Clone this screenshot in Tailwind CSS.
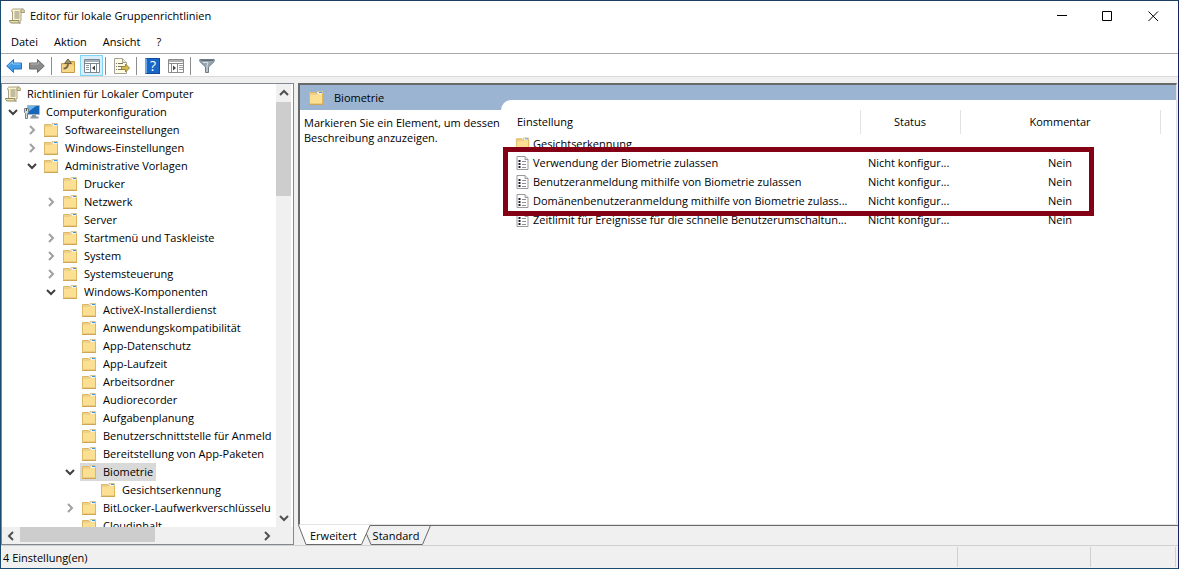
<!DOCTYPE html>
<html lang="de">
<head>
  <meta charset="UTF-8" />
  <meta name="viewport" content="width=device-width, initial-scale=1.0"/>
  <title>Editor für lokale Gruppenrichtlinien</title>
  <script src="https://cdn.jsdelivr.net/npm/@tailwindcss/browser@4"></script>
</head>
<body class="h-screen flex flex-col overflow-hidden bg-[#f0f0f0] border border-[#1b4c6d] border-t-[#1d3f62] border-r-[#1b2160] text-black text-[11px] leading-4 font-['Open_Sans','Noto_Sans',sans-serif]">

  <!-- Icon sprites -->
  <svg class="hidden">
    <symbol id="folder" viewBox="0 0 16 16">
      <path d="M1.5 2.500h6l1 1h6v10h-13z" fill="#eed08a" stroke="#dcb866"/>
      <path d="M9 1.500h5.500v3H9z" fill="#f7f3e4" stroke="#d9c591"/>
      <path d="M11 2h3v1h-3z" fill="#3b98e0"/>
      <path d="M2 5h6l1-1h5v9.500H2z" fill="#fbdf92"/>
      <path d="M1 14.500h14" stroke="#cfa654"/>
      <path d="M14.500 4v10" stroke="#dfb65c"/>
    </symbol>
    <symbol id="scroll" viewBox="0 0 16 16">
      <path d="M4.500 1c-1.500 0-2 1-2 2.500h1V13h8.500V3.500C12 2 12.500 1 13.500 1z" fill="#fdf3c8" stroke="#aaa284"/>
      <path d="M13.500 1c1.200 0 2 1 2 2.500V4.500H12V3.500C12 2 12.500 1 13.500 1z" fill="#d9cf9c" stroke="#a09a80"/>
      <path d="M.5 12.500h9c0 1.500.5 2.500 2 2.500H3C1.200 15 .5 14 .5 12.500z" fill="#efe2a8" stroke="#8f8768"/>
      <path d="M5.500 4h5M5.500 6h5M5.500 8h5M5.500 10h5" stroke="#858379"/>
    </symbol>
    <symbol id="computer" viewBox="0 0 16 16">
      <path d="M3.500 1.500h12v9h-12z" fill="#1467b8" stroke="#a9b6c2"/>
      <path d="M4 2h8l-8 6z" fill="#6ab4ec"/>
      <path d="M8 11h4v2H8z" fill="#8d979f"/>
      <path d="M6.500 13.500h8" stroke="#8b969f" stroke-width="2"/>
      <path d="M.5 4.500h4v4l-1 1v5h-2v-5l-1-1z" fill="#d2d9de" stroke="#74808a"/>
      <path d="M2.500 4v3" stroke="#4d5b66"/>
    </symbol>
    <symbol id="policy" viewBox="0 0 14 16">
      <path d="M1.500 1.500h8l3 3v10h-11z" fill="#fff" stroke="#9a9a9a"/>
      <path d="M9.500 1.500v3h3" fill="#e8e8e8" stroke="#9a9a9a"/>
      <path d="M3 5h2v2H3zM3 8h2v2H3zM3 11h2v2H3z" fill="#1f1f2a"/>
      <path d="M6.500 6.500h4M6.500 9.500h4M6.500 12.500h4" stroke="#8a8f99"/>
    </symbol>
    <symbol id="down" viewBox="0 0 10 10"><path d="M1 3l4 4 4-4" fill="none" stroke="currentColor" stroke-width="2"/></symbol>
    <symbol id="right" viewBox="0 0 10 10"><path d="M3 1l4 4-4 4" fill="none" stroke="currentColor" stroke-width="2"/></symbol>
    <symbol id="up" viewBox="0 0 10 10"><path d="M1 7l4-4 4 4" fill="none" stroke="currentColor" stroke-width="2"/></symbol>
    <symbol id="left" viewBox="0 0 10 10"><path d="M7 1L3 5l4 4" fill="none" stroke="currentColor" stroke-width="2"/></symbol>
  </svg>

  <!-- Title bar -->
  <header class="h-[30px] shrink-0 flex items-center bg-white pl-2">
    <svg class="size-4"><use href="#scroll"/></svg>
    <h1 class="pl-[5px]">Editor für lokale Gruppenrichtlinien</h1>
    <div class="ml-auto flex h-full pr-px">
      <button aria-label="Minimieren" class="w-[45px] flex items-center justify-center"><svg class="w-[11px] h-[11px]"><path d="M0 4.500h10" stroke="#000"/></svg></button>
      <button aria-label="Maximieren" class="w-[45px] flex items-center justify-center"><svg class="w-[11px] h-[11px]"><path d="M.5 .5h9v9h-9z" fill="none" stroke="#000"/></svg></button>
      <button aria-label="Schließen" class="w-[47px] flex items-center justify-center"><svg class="w-[11px] h-[11px]"><path d="M.5 .5l9.500 9.500M10 .5L.5 10" stroke="#000"/></svg></button>
    </div>
  </header>

  <!-- Menu -->
  <nav class="h-[23px] shrink-0 flex items-center gap-4 bg-white border-b border-[#a9a9a9] pl-[10px]">
    <button>Datei</button>
    <button>Aktion</button>
    <button>Ansicht</button>
    <button>?</button>
  </nav>

  <!-- Toolbar -->
  <div class="h-[23px] shrink-0 flex items-center bg-white border-b border-[#d9d9d9] pl-[5px] pt-px">
    <button aria-label="Zurück"><svg class="w-4 h-4" viewBox="0 0 16 16"><path d="M.7 8L7.500 1.500V5h8v6h-8v3.500z" fill="#3f9be6" stroke="#2a73b8"/><path d="M2.200 8L6.500 4v2h8" fill="none" stroke="#8fcbf7"/></svg></button>
    <button aria-label="Vor" class="ml-[7px]"><svg class="w-4 h-4" viewBox="0 0 16 16"><path d="M15.300 8L8.500 1.500V5h-8v6h8v3.500z" fill="#8b8b8b" stroke="#6c6c6c"/><path d="M1.500 6h8V4" fill="none" stroke="#b5b5b5"/></svg></button>
    <span class="w-px h-[18px] bg-[#8d8d8d] mx-[6px]"></span>
    <button aria-label="Eine Ebene nach oben" class="ml-[2px]"><svg class="w-4 h-4" viewBox="0 0 16 16"><path d="M1.500 5.500h4l1.500-2h7.500v11h-13z" fill="#eec874" stroke="#c79a44"/><path d="M2 7.500h12V14H2z" fill="#f8d88a"/><path d="M3.500 10.500c3 0 4.500-2 4.500-5" fill="none" stroke="#7a6c4b" stroke-width="2"/><path d="M4.500 5.500L8 1l3.500 4.500z" fill="#a39264" stroke="#6a5d3f"/></svg></button>
    <button aria-label="Konsolenstruktur ein-/ausblenden" class="ml-1 w-[23px] h-[21px] flex items-center justify-center bg-[#d8effb] border border-[#7fd3f5]"><svg class="w-4 h-[14px]" viewBox="0 0 16 14"><path d="M.5 .5h15v13H.5z" fill="#fff" stroke="#7c8691"/><path d="M1 2h14" stroke="#aab3bb" stroke-width="2"/><path d="M1 4.500h14M6.500 5v9M12.500 5v9" stroke="#7c8691"/><path d="M2 6.500h3M2 8.500h3M2 10.500h3" stroke="#8f98a2"/><path d="M11 6.500v5L8 9z" fill="#444"/></svg></button>
    <span class="w-px h-[18px] bg-[#8d8d8d] ml-[2px] mr-2"></span>
    <button aria-label="Liste exportieren"><svg class="w-4 h-4" viewBox="0 0 16 16"><path d="M.5 .5h8l4 4v11H.5z" fill="#fffbe3" stroke="#a5a298"/><path d="M8.500 .5v4h4" fill="#eee7c4" stroke="#a5a298"/><path d="M2 5.500h1M4 5.500h5M2 8.500h1M4 8.500h4M2 11.500h1M4 11.500h4" stroke="#77746a"/><path d="M7.500 8.500h4V6L15.500 10l-4 4v-2.500h-4z" fill="#d8bd57" stroke="#9a8438"/></svg></button>
    <span class="w-px h-[18px] bg-[#8d8d8d] ml-[6px] mr-2"></span>
    <button aria-label="Hilfe" class="w-[15px] h-4 bg-[#1a66c6] border border-[#144c9a] border-l-[#6aa9ec] border-l-2 text-white text-sm leading-[14px]">?</button>
    <button aria-label="Aktionsbereich ein-/ausblenden" class="ml-2"><svg class="w-4 h-[14px]" viewBox="0 0 16 14"><path d="M.5 .5h15v13H.5z" fill="#fff" stroke="#8a8a8a"/><path d="M1 2h14" stroke="#b0b0b0" stroke-width="2"/><path d="M1 4.500h14M3.500 5v9M9.500 5v9" stroke="#8a8a8a"/><path d="M11 6.500h4M11 8.500h4M11 10.500h4" stroke="#999"/><path d="M5 6.500v5L8 9z" fill="#444"/></svg></button>
    <span class="w-px h-[18px] bg-[#8d8d8d] ml-[6px] mr-2"></span>
    <button aria-label="Filter"><svg class="w-4 h-4" viewBox="0 0 16 16"><path d="M.8 1.500h14.400v2L9.500 9v5.500h-3V9L.8 3.500z" fill="#97a7b2" stroke="#6f7c86"/><path d="M2 2.500h12" stroke="#5d6a73"/><path d="M4 4.500h5L8 8v6" fill="none" stroke="#d5dfe6"/></svg></button>
  </div>

  <main class="flex-1 min-h-0 flex mt-[6px]">

    <!-- Tree pane -->
    <aside class="w-[293px] shrink-0 flex flex-col bg-white border border-[#828790]">
      <div class="flex-1 min-h-0 flex">
        <ul id="tree" class="flex-1 min-w-0 overflow-hidden whitespace-nowrap pt-px"></ul>
        <div class="w-[15px] mr-[2px] shrink-0 flex flex-col bg-[#f0f0f0] text-[#505050]">
          <button aria-label="Nach oben" class="h-[18px] flex items-center justify-center"><svg class="size-[10px]"><use href="#up"/></svg></button>
          <div class="h-[94px] bg-[#cdcdcd]"></div>
          <button aria-label="Nach unten" class="mt-auto h-[18px] flex items-center justify-center"><svg class="size-[10px]"><use href="#down"/></svg></button>
        </div>
      </div>
      <div class="h-[17px] shrink-0 flex bg-[#f0f0f0] text-[#505050] pr-[17px]">
        <button aria-label="Nach links" class="w-[18px] flex items-center justify-center"><svg class="size-[10px]"><use href="#left"/></svg></button>
        <div class="w-[135px] h-[15px] bg-[#cdcdcd]"></div>
        <button aria-label="Nach rechts" class="ml-auto w-[18px] flex items-center justify-center"><svg class="size-[10px]"><use href="#right"/></svg></button>
      </div>
    </aside>

    <!-- Detail pane -->
    <section class="flex-1 min-w-0 flex flex-col ml-1">
      <div class="flex-1 min-h-0 mr-px flex flex-col bg-white border-t-2 border-l-2 border-r border-b border-t-[#696969] border-l-[#696969] border-r-[#e3e3e3] border-b-[#e3e3e3]">
        <div class="h-[25px] shrink-0 flex items-center bg-[#9ab4d1] pl-2">
          <svg class="size-4"><use href="#folder"/></svg>
          <h2 class="pl-[10px]">Biometrie</h2>
        </div>
        <div class="flex-1 flex">
          <p class="w-[201px] shrink-0 pl-1 pt-[5px] leading-[15px] whitespace-nowrap">Markieren Sie ein Element, um dessen<br>Beschreibung anzuzeigen.</p>
          <div class="relative flex-1 min-w-0 -mt-[10px] pt-[10px] pl-2 rounded-tl-[10px] bg-white">
            <table class="table-fixed w-[651px] border-collapse">
              <thead>
                <tr class="h-6">
                  <th class="w-[351px] pl-2 text-left font-normal border-r border-[#e2e2e2]">Einstellung</th>
                  <th class="w-[100px] text-center font-normal border-r border-[#e2e2e2]">Status</th>
                  <th class="w-[200px] text-center font-normal border-r border-[#e2e2e2]">Kommentar</th>
                </tr>
              </thead>
              <tbody id="settings"></tbody>
            </table>
            <!-- Highlight around the three biometric settings -->
            <div class="absolute left-[2px] top-[47px] w-[591px] h-[69px] border-5 border-[#840015]"></div>
          </div>
        </div>
      </div>

      <!-- View tabs -->
      <div class="relative h-5 shrink-0 border-t border-[#696969] flex items-center">
        <svg class="absolute left-0 -top-px w-[140px] h-5" viewBox="0 0 140 20">
          <path d="M0 0h72l-8 19H8z" fill="#fff"/>
          <path d="M.5 0L8 19.500h55.500L72 .5" fill="none" stroke="#696969"/>
          <path d="M68.500 9l4.500 10.500h51.500L132.500 .5" fill="none" stroke="#696969"/>
        </svg>
        <button class="relative ml-3">Erweitert</button>
        <button class="relative ml-4">Standard</button>
      </div>
    </section>
  </main>

  <!-- Status bar -->
  <footer class="h-[23px] shrink-0 flex border-t border-[#d0d0d0] pr-[2px] py-px">
    <p class="flex-1 pl-[2px] leading-[22px] border-r border-[#d0d0d0]">4 Einstellung(en)</p>
    <div class="w-[133px] border-r border-[#d0d0d0]"></div>
    <div class="w-[85px] border-r border-[#d0d0d0]"></div>
  </footer>

  <script>
    // state: 'open', 'closed' or '' for entries without children
    const tree = [
      { level: 0, icon: 'scroll', state: '', name: 'Richtlinien für Lokaler Computer' },
      { level: 1, icon: 'computer', state: 'open', name: 'Computerkonfiguration' },
      { level: 2, icon: 'folder', state: 'closed', name: 'Softwareeinstellungen' },
      { level: 2, icon: 'folder', state: 'closed', name: 'Windows-Einstellungen' },
      { level: 2, icon: 'folder', state: 'open', name: 'Administrative Vorlagen' },
      { level: 3, icon: 'folder', state: '', name: 'Drucker' },
      { level: 3, icon: 'folder', state: 'closed', name: 'Netzwerk' },
      { level: 3, icon: 'folder', state: '', name: 'Server' },
      { level: 3, icon: 'folder', state: 'closed', name: 'Startmenü und Taskleiste' },
      { level: 3, icon: 'folder', state: 'closed', name: 'System' },
      { level: 3, icon: 'folder', state: 'closed', name: 'Systemsteuerung' },
      { level: 3, icon: 'folder', state: 'open', name: 'Windows-Komponenten' },
      { level: 4, icon: 'folder', state: '', name: 'ActiveX-Installerdienst' },
      { level: 4, icon: 'folder', state: '', name: 'Anwendungskompatibilität' },
      { level: 4, icon: 'folder', state: '', name: 'App-Datenschutz' },
      { level: 4, icon: 'folder', state: '', name: 'App-Laufzeit' },
      { level: 4, icon: 'folder', state: '', name: 'Arbeitsordner' },
      { level: 4, icon: 'folder', state: '', name: 'Audiorecorder' },
      { level: 4, icon: 'folder', state: '', name: 'Aufgabenplanung' },
      { level: 4, icon: 'folder', state: '', name: 'Benutzerschnittstelle für Anmeld' },
      { level: 4, icon: 'folder', state: '', name: 'Bereitstellung von App-Paketen' },
      { level: 4, icon: 'folder', state: 'open', name: 'Biometrie', selected: true },
      { level: 5, icon: 'folder', state: '', name: 'Gesichtserkennung' },
      { level: 4, icon: 'folder', state: 'closed', name: 'BitLocker-Laufwerkverschlüsselu' },
      { level: 4, icon: 'folder', state: '', name: 'Cloudinhalt' }
    ];

    const settings = [
      { icon: 'folder', name: 'Gesichtserkennung', status: '', comment: '' },
      { icon: 'policy', name: 'Verwendung der Biometrie zulassen', status: 'Nicht konfigur...', comment: 'Nein' },
      { icon: 'policy', name: 'Benutzeranmeldung mithilfe von Biometrie zulassen', status: 'Nicht konfigur...', comment: 'Nein' },
      { icon: 'policy', name: 'Domänenbenutzeranmeldung mithilfe von Biometrie zulass...', status: 'Nicht konfigur...', comment: 'Nein' },
      { icon: 'policy', name: 'Zeitlimit für Ereignisse für die schnelle Benutzerumschaltun...', status: 'Nicht konfigur...', comment: 'Nein' }
    ];

    const indent = ['pl-[2px]', 'pl-[2px]', 'pl-[21px]', 'pl-[40px]', 'pl-[59px]', 'pl-[78px]'];

    // Expander in front of a tree entry
    function getExpander(item) {
      if (item.level === 0) return '';
      if (item.state === 'open') {
        return `<button aria-label="Reduzieren" class="w-[19px] shrink-0 pl-1 text-[#404040]"><svg class="size-[10px]"><use href="#down"/></svg></button>`;
      }
      if (item.state === 'closed') {
        return `<button aria-label="Erweitern" class="w-[19px] shrink-0 pl-1 text-[#a0a0a0]"><svg class="size-[10px]"><use href="#right"/></svg></button>`;
      }
      return `<span class="w-[19px] shrink-0"></span>`;
    }

    document.getElementById('tree').innerHTML = tree.map(item => `
      <li class="flex items-center h-[18px] ${indent[item.level]}">
        ${getExpander(item)}
        <a href="#" class="flex items-center shrink-0 h-[18px] pl-px pr-[3px] ${item.selected ? 'bg-[#d9d9d9]' : ''}">
          <svg class="size-4 mr-[6px]"><use href="#${item.icon}"/></svg>${item.name}
        </a>
      </li>
    `).join('');

    document.getElementById('settings').innerHTML = settings.map(row => `
      <tr class="h-[19px]">
        <td class="p-0 pl-[6px]"><div class="flex items-center gap-[3px] whitespace-nowrap"><svg class="w-[15px] h-4"><use href="#${row.icon}"/></svg>${row.name}</div></td>
        <td class="p-0 pl-2 whitespace-nowrap">${row.status}</td>
        <td class="p-0 text-center">${row.comment}</td>
      </tr>
    `).join('');
  </script>

</body>
</html>
